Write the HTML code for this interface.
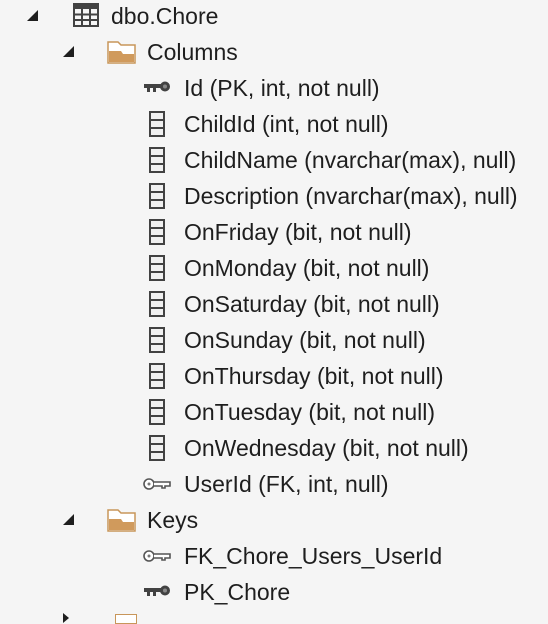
<!DOCTYPE html>
<html><head><style>
body{margin:0;width:548px;height:619px;background:#f5f5f5;overflow:hidden;position:relative;font-family:"Liberation Sans",sans-serif;font-size:23px;color:#1e1e1e}
.r{position:absolute;height:36px;line-height:36px;white-space:nowrap}
.t{position:absolute;width:0;height:0;border-left:11px solid transparent;border-bottom:11px solid #1e1e1e}
svg{position:absolute}
</style></head><body>
<div class="t" style="left:27px;top:10px"></div>
<svg style="left:73px;top:3px" width="26" height="24" viewBox="0 0 26 24"><rect x="1" y="1" width="24" height="22" fill="none" stroke="#424242" stroke-width="2"/><rect x="1" y="1" width="24" height="5" fill="#424242"/><path d="M1 11.5H25M1 17H25M9 6V23M17 6V23" stroke="#424242" stroke-width="2"/></svg>
<div class="r" style="left:111px;top:-2px">dbo.Chore</div>

<div class="t" style="left:63px;top:46px"></div>
<svg style="left:107px;top:39px" width="29" height="25" viewBox="0 0 29 25"><path d="M1 3H11L14 6H28V24H1Z" fill="#fff" stroke="#c8965a" stroke-width="1.5"/><path d="M2 12H14L16 15H27V23H2Z" fill="#d09a5c"/></svg>
<div class="r" style="left:147px;top:34px">Columns</div>

<svg style="left:144px;top:80px" width="28" height="14" viewBox="0 0 28 14"><rect x="0" y="4" width="18" height="4" fill="#424242"/><rect x="3" y="7" width="3" height="5" fill="#424242"/><rect x="9" y="7" width="3" height="5" fill="#424242"/><circle cx="21" cy="6.5" r="5" fill="#424242"/><circle cx="21" cy="6.5" r="2" fill="#888"/></svg>
<div class="r" style="left:184px;top:70px">Id (PK, int, not null)</div>

<div id="cols"></div>
<script>
var names=["ChildId (int, not null)","ChildName (nvarchar(max), null)","Description (nvarchar(max), null)","OnFriday (bit, not null)","OnMonday (bit, not null)","OnSaturday (bit, not null)","OnSunday (bit, not null)","OnThursday (bit, not null)","OnTuesday (bit, not null)","OnWednesday (bit, not null)"];
var h="";
names.forEach(function(n,i){var y=106+i*36;
h+='<svg style="left:149px;top:'+(y+5)+'px" width="16" height="26" viewBox="0 0 16 26"><rect x="1" y="1" width="14" height="24" fill="#f0f0f0" stroke="#424242" stroke-width="2"/><path d="M1 9H15M1 17H15" stroke="#424242" stroke-width="2"/></svg>';
h+='<div class="r" style="left:184px;top:'+(y)+'px">'+n+'</div>';});
document.getElementById("cols").outerHTML=h;
</script>

<svg style="left:143px;top:477px" width="28" height="14" viewBox="0 0 28 14"><circle cx="6" cy="7" r="5" fill="#fff" stroke="#555" stroke-width="1.6"/><circle cx="6" cy="7" r="1.5" fill="#777"/><path d="M11 5H27V9H22V11H19V9H11" fill="#fff" stroke="#555" stroke-width="1.6"/></svg>
<div class="r" style="left:184px;top:466px">UserId (FK, int, null)</div>

<div class="t" style="left:63px;top:514px"></div>
<svg style="left:107px;top:507px" width="29" height="25" viewBox="0 0 29 25"><path d="M1 3H11L14 6H28V24H1Z" fill="#fff" stroke="#c8965a" stroke-width="1.5"/><path d="M2 12H14L16 15H27V23H2Z" fill="#d09a5c"/></svg>
<div class="r" style="left:147px;top:502px">Keys</div>

<svg style="left:143px;top:549px" width="28" height="14" viewBox="0 0 28 14"><circle cx="6" cy="7" r="5" fill="#fff" stroke="#555" stroke-width="1.6"/><circle cx="6" cy="7" r="1.5" fill="#777"/><path d="M11 5H27V9H22V11H19V9H11" fill="#fff" stroke="#555" stroke-width="1.6"/></svg>
<div class="r" style="left:184px;top:538px">FK_Chore_Users_UserId</div>

<svg style="left:144px;top:584px" width="28" height="14" viewBox="0 0 28 14"><rect x="0" y="4" width="18" height="4" fill="#424242"/><rect x="3" y="7" width="3" height="5" fill="#424242"/><rect x="9" y="7" width="3" height="5" fill="#424242"/><circle cx="21" cy="6.5" r="5" fill="#424242"/><circle cx="21" cy="6.5" r="2" fill="#888"/></svg>
<div class="r" style="left:184px;top:574px">PK_Chore</div>

<div style="position:absolute;left:63px;top:613px;width:0;height:0;border-top:5px solid transparent;border-bottom:5px solid transparent;border-left:6px solid #1e1e1e"></div>
<div style="position:absolute;left:115px;top:614px;width:20px;height:8px;background:#fff;border:1.5px solid #c8965a"></div>
</body></html>
